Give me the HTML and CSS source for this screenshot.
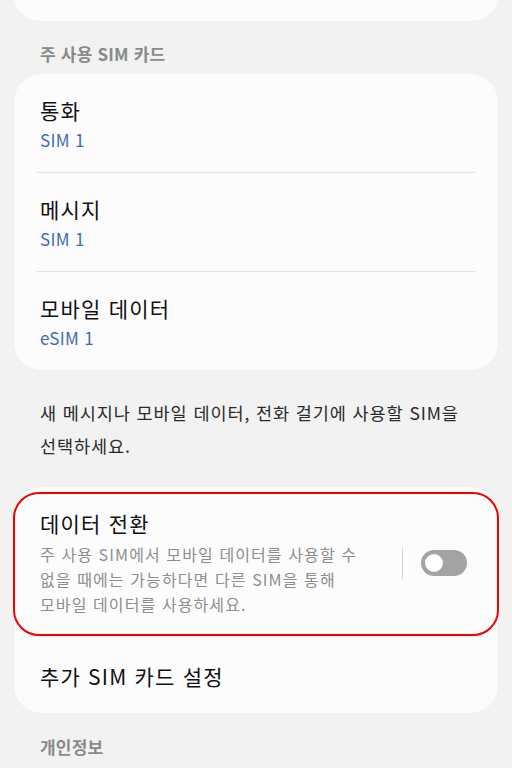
FILE: index.html
```html
<!DOCTYPE html>
<html lang="ko">
<head>
<meta charset="utf-8">
<title>SIM 관리자</title>
<link rel="stylesheet" href="styles.css">
</head>
<body>
<div class="screen">
  <div class="card card-top">
    <div class="top-text">모바일 네트워크에 연결된 SIM 카드를 관리하세요</div>
  </div>

  <div class="section-header">주 사용 SIM 카드</div>

  <div class="card">
    <div class="row">
      <div class="title">통화</div>
      <div class="sub">SIM 1</div>
    </div>
    <div class="row divided">
      <div class="title">메시지</div>
      <div class="sub">SIM 1</div>
    </div>
    <div class="row divided">
      <div class="title">모바일 데이터</div>
      <div class="sub">eSIM 1</div>
    </div>
  </div>

  <p class="help">새 메시지나 모바일 데이터, 전화 걸기에 사용할 SIM을 선택하세요.</p>

  <div class="card card-3">
    <div class="switch-row highlighted">
      <div class="switch-text">
        <div class="title">데이터 전환</div>
        <div class="desc">주 사용 SIM에서 모바일 데이터를 사용할 수 없을 때에는 가능하다면 다른 SIM을 통해 모바일 데이터를 사용하세요.</div>
      </div>
      <div class="vline"></div>
      <div class="toggle"><span class="knob"></span></div>
    </div>
    <div class="row single">
      <div class="title">추가 SIM 카드 설정</div>
    </div>
  </div>

  <div class="section-header bottom">개인정보</div>
</div>
</body>
</html>
```

FILE: styles.css
```css
html, body {
  margin: 0;
  padding: 0;
  background: #f2f2f2;
}

body {
  font-family: "Noto Sans CJK KR", "Noto Sans", sans-serif;
  color: #111;
  width: 512px;
  height: 768px;
  overflow: hidden;
  word-break: keep-all;
}

.screen {
  display: flex;
  flex-direction: column;
  margin-top: -50px;
}

.card {
  background: #fcfcfc;
  margin: 0 14px;
  border-radius: 28px;
}

.card-top {
  height: 71px;
  border-radius: 0 0 26px 26px;
  display: flex;
  justify-content: center;
}

.top-text {
  font-size: 17px;
  line-height: 24px;
  color: #777;
  margin-top: 28px;
  letter-spacing: 1px;
}

.section-header {
  font-size: 17px;
  line-height: 22px;
  font-weight: 700;
  letter-spacing: 0.2px;
  color: #8a8a8a;
  padding: 22px 0 9px 40px;
}

.section-header.bottom {
  padding-top: 23px;
}

.row {
  margin: 0 23px;
  padding: 22px 3px 20px;
}

.row.divided {
  border-top: 1px solid #e3e3e3;
}

.row.single {
  padding: 22px 3px 23px;
}

.title {
  font-size: 21px;
  line-height: 28px;
  letter-spacing: 1.2px;
  color: #111;
}

.sub {
  font-size: 17px;
  line-height: 24px;
  letter-spacing: 0.3px;
  color: #3f6cb0;
  margin-top: 4px;
}

.help {
  margin: 0;
  padding: 26px 40px 25px;
  font-size: 17.5px;
  line-height: 33px;
  letter-spacing: 0.9px;
  color: #2a2a2a;
}

.card-3 {
  display: flex;
  flex-direction: column;
}

.switch-row {
  position: relative;
  display: flex;
  align-items: center;
  padding: 22px 31px 23px 26px;
}

.highlighted::after {
  content: "";
  position: absolute;
  top: 5px;
  left: -1px;
  right: -1px;
  bottom: 4px;
  border: 2px solid #f00000;
  border-radius: 26px;
}

.switch-text {
  width: 330px;
}

.desc {
  margin-top: 5px;
  font-size: 16px;
  line-height: 25px;
  letter-spacing: 1.1px;
  color: #8d8d8d;
}

.vline {
  width: 1px;
  height: 32px;
  background: #d6d6d6;
  margin-left: 32px;
}

.toggle {
  width: 46px;
  height: 26px;
  border-radius: 13px;
  background: #a3a3a3;
  margin-left: 18px;
  display: flex;
  align-items: center;
  padding-left: 2px;
  box-sizing: border-box;
}

.knob {
  width: 18px;
  height: 18px;
  border-radius: 50%;
  background: #fff;
  border: 2px solid #a3a3a3;
  box-sizing: content-box;
}
```
